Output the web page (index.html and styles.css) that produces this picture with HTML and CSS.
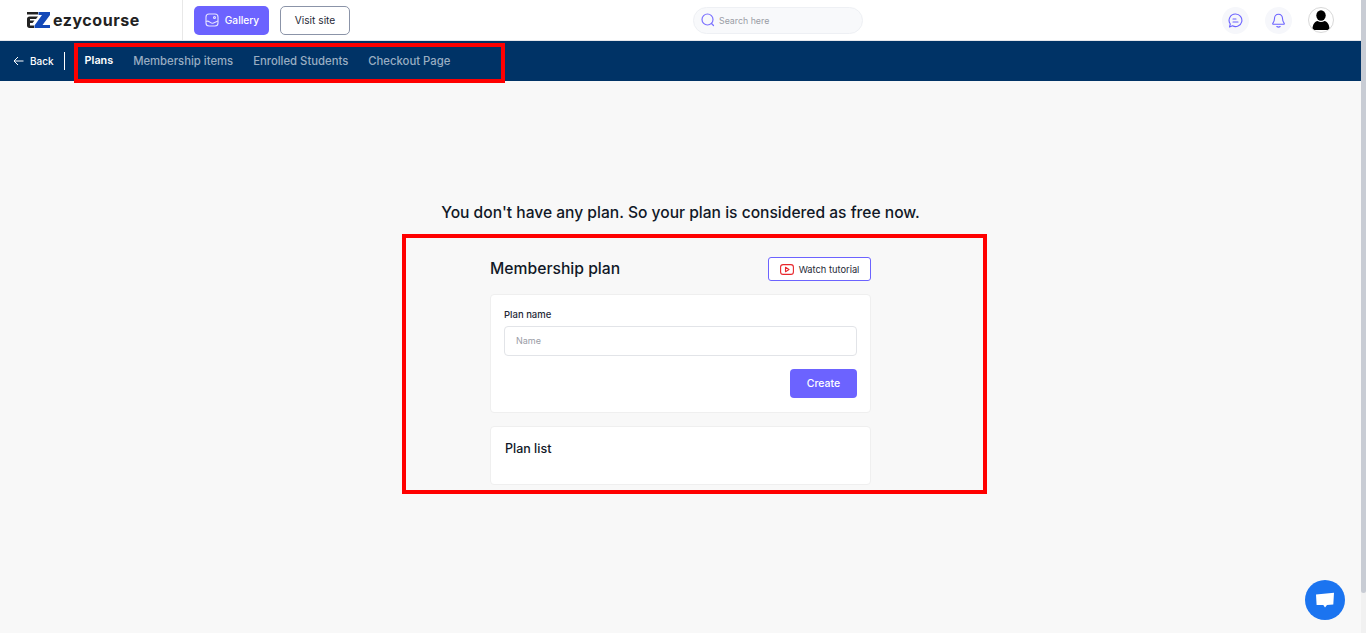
FILE: index.html
```html
<!DOCTYPE html>
<html lang="en">
<head>
<meta charset="utf-8">
<title>Membership plan</title>
<link rel="stylesheet" href="styles.css">
</head>
<body>
<div class="page">
  <header class="topbar">
    <div class="brand">
      <svg class="logo" width="23" height="16" viewBox="0 0 23 16">
        <path fill="#222" d="M0 0h11v2.500H0z"/>
        <path fill="#222" d="M2.500 4.500H11L9 7H3v1.500h4.500L5.500 11H3v2.500h4V16H2.500C1 16 0 15 0 13.500V7C0 5.600 1 4.500 2.500 4.500z"/>
        <path fill="#1449b8" d="M11.500 0H23v3L15.500 13H23v3H7.500v-2.500L15 3h-3.500z"/>
      </svg>
      <span class="brand-name">ezycourse</span>
    </div>
    <div class="top-actions">
      <button class="btn-gallery">
        <svg width="14" height="14" viewBox="0 0 14 14" fill="none" stroke="#e6e4ff" stroke-width="1.100"><rect x="1" y="1" width="12" height="12" rx="3"/><path d="M1 8.500c3-2 4.500 3 7.500 1.500l4.500-2"/><circle cx="9.500" cy="4.500" r="1"/></svg>
        Gallery
      </button>
      <button class="btn-visit">Visit site</button>
    </div>
    <div class="search-wrap">
      <div class="search">
        <svg width="14" height="14" viewBox="0 0 14 14" fill="none" stroke="#7c72ff" stroke-width="1.200"><circle cx="6.500" cy="6.500" r="5.500"/><path d="M10.500 10.500l2 2" stroke-linecap="round"/></svg>
        <span>Search here</span>
      </div>
    </div>
    <div class="top-icons">
      <span class="round">
        <svg width="15" height="15" viewBox="0 0 15 15" fill="none" stroke="#6c63ff" stroke-width="1.100"><path d="M7.500 1a6.300 6.300 0 1 1-3 11.800L1.500 14l.8-3A6.300 6.300 0 0 1 7.500 1z" stroke-linejoin="round"/><path d="M5 6h3M5 9h5" stroke-linecap="round"/></svg>
      </span>
      <span class="round">
        <svg width="15" height="15" viewBox="0 0 15 15" fill="none" stroke="#6c63ff" stroke-width="1.100"><path d="M7.500 1.200c-2.600 0-4 2-4 4.300 0 2.500-.6 3.400-1.700 4.800-.3.400 0 .9.500.9h10.400c.5 0 .8-.5.500-.9-1.100-1.400-1.700-2.300-1.700-4.800 0-2.300-1.400-4.300-4-4.300z" stroke-linejoin="round"/><path d="M5.800 13.500c1 .7 2.400.7 3.400 0" stroke-linecap="round"/></svg>
      </span>
      <span class="avatar">
        <svg width="18" height="20" viewBox="0 0 18 20" fill="#000"><ellipse cx="9" cy="5.500" rx="4.700" ry="5.200"/><path d="M0.500 19c0-4.500 2.500-7.500 5-8 2 1.200 5 1.200 7 0 2.500.5 5 3.500 5 8 0 .7-.5 1-1 1H1.500c-.5 0-1-.3-1-1z"/></svg>
      </span>
    </div>
  </header>

  <nav class="subnav">
    <a class="back">
      <svg width="11" height="10" viewBox="0 0 11 10" fill="none" stroke="#fff" stroke-width="1"><path d="M10.500 5H1M5 1L1 5l4 4"/></svg>
      Back
    </a>
    <span class="divider"></span>
    <ul class="tabs">
      <li class="tab active">Plans</li>
      <li class="tab">Membership items</li>
      <li class="tab">Enrolled Students</li>
      <li class="tab">Checkout Page</li>
    </ul>
  </nav>

  <main class="content">
    <h2 class="notice">You don't have any plan. So your plan is considered as free now.</h2>
    <section class="highlight">
      <div class="column">
        <div class="col-head">
          <h1 class="title">Membership plan</h1>
          <button class="btn-watch">
            <svg width="14" height="11" viewBox="0 0 14 11" fill="none" stroke="#e8262b" stroke-width="1.100"><rect x=".6" y=".6" width="12.800" height="9.800" rx="2.500"/><path d="M5.500 3.300v4.400L9 5.500z" stroke-linejoin="round"/></svg>
            Watch tutorial
          </button>
        </div>
        <div class="card form-card">
          <label class="label">Plan name</label>
          <div class="input">Name</div>
          <div class="form-foot"><button class="btn-create">Create</button></div>
        </div>
        <div class="card list-card">
          <h3 class="list-title">Plan list</h3>
        </div>
      </div>
    </section>
  </main>

  <div class="nav-mark"></div>
  <div class="scrollbar"><div class="thumb"></div></div>
  <button class="chat">
    <svg width="20" height="17" viewBox="0 0 20 17" fill="#fff"><path d="M1 2.500L19 .8l-.7 11.700-6.300.4L10 15.500 8.300 13 1.600 13z"/></svg>
  </button>
</div>
</body>
</html>
```

FILE: styles.css
```css
* { box-sizing: border-box; }
html, body { margin: 0; padding: 0; height: 100%; overflow: hidden; }
body { font-family: Inter, "Noto Sans", "Liberation Sans", sans-serif; color: #111827; background: #f8f8f8; }
button { font-family: inherit; cursor: pointer; }
ul { list-style: none; margin: 0; padding: 0; }
h1, h2, h3 { margin: 0; font-weight: 500; }

.page { position: relative; height: 633px; display: flex; flex-direction: column; }

.topbar { height: 41px; flex: none; background: #fff; border-bottom: 1px solid #e5e7eb; display: flex; align-items: center; padding-right: 32px; }
.brand { width: 183px; height: 40px; flex: none; border-right: 1px solid #e8e8e8; display: flex; align-items: center; gap: 3px; padding-left: 27px; }
.logo { flex: none; }
.brand-name { font-size: 16px; font-weight: 700; letter-spacing: .55px; color: #222; }
.top-actions { display: flex; align-items: center; gap: 11px; margin-left: 11px; }
.btn-gallery { width: 75px; height: 29px; border: 0; border-radius: 5px; background: #6c63ff; color: #fff; font-size: 10.200px; font-weight: 500; display: flex; align-items: center; justify-content: center; gap: 6px; padding: 0 0 0 1px; }
.btn-visit { width: 70px; height: 29px; border: 1px solid #8b94a8; border-radius: 5px; background: #fff; color: #1f2937; font-size: 10.200px; padding: 0; }
.search-wrap { flex: 1; display: flex; padding-left: 343px; }
.search { width: 170px; height: 27px; border: 1px solid #eef0f4; border-radius: 14px; background: #f8f9fb; display: flex; align-items: center; gap: 4px; padding-left: 7px; font-size: 8.800px; color: #9a9da6; }
.top-icons { display: flex; align-items: center; gap: 16px; }
.round { width: 27px; height: 27px; border-radius: 50%; background: #f6f7fb; display: flex; align-items: center; justify-content: center; }
.avatar { width: 26px; height: 26px; border-radius: 50%; background: #fff; border: 1px solid #d9d9d9; display: flex; align-items: flex-end; justify-content: center; overflow: hidden; padding-bottom: 2px; }

.subnav { height: 40px; flex: none; background: #003366; display: flex; align-items: center; padding-left: 13px; }
.back { display: flex; align-items: center; gap: 6px; color: #fff; font-size: 10px; font-weight: 500; }
.divider { width: 1px; height: 18px; background: #fff; margin-left: 10px; }
.tabs { display: flex; gap: 20px; margin-left: 20px; }
.tab { font-size: 11.300px; font-weight: 500; color: #99adc2; }
.tab.active { color: #fff; font-size: 10.800px; font-weight: 600; }

.content { flex: 1; display: flex; flex-direction: column; align-items: center; padding: 122px 5px 0 0; }
.notice { font-size: 15.600px; line-height: 20px; color: #111827; }
.highlight { width: 585px; height: 260px; margin: 11px 0 0 28px; border: 4px solid #f00; display: flex; justify-content: center; }
.column { width: 381px; margin-right: 28px; padding-top: 19px; flex: none; }
.col-head { display: flex; align-items: center; justify-content: space-between; height: 24px; }
.title { font-size: 15.700px; line-height: 26px; color: #111827; }
.btn-watch { width: 103px; height: 24px; border: 1px solid #6c63ff; border-radius: 3px; background: #fff; color: #1f2937; font-size: 9.300px; display: flex; align-items: center; justify-content: center; gap: 5px; padding: 0; }
.card { background: #fff; border: 1px solid #efefef; border-radius: 4px; }
.form-card { height: 119px; margin-top: 13px; padding: 14px 13px 0; display: flex; flex-direction: column; }
.label { font-size: 9.500px; line-height: 12px; font-weight: 500; color: #1f2937; }
.input { height: 30px; margin-top: 5px; border: 1px solid #e2e4e8; border-radius: 4px; background: #fff; font-size: 9px; line-height: 28px; padding-left: 11px; color: #9a9da6; }
.form-foot { display: flex; justify-content: flex-end; margin-top: 13px; }
.btn-create { width: 67px; height: 29px; border: 0; border-radius: 4px; background: #6c63ff; color: #fff; font-size: 10.500px; font-weight: 500; padding: 0; }
.list-card { height: 59px; margin-top: 13px; padding: 14px; }
.list-title { font-size: 12.500px; line-height: 15px; font-weight: 500; color: #111827; }

.nav-mark { position: absolute; left: 74px; top: 43px; width: 431px; height: 40px; border: 4px solid #f00; }
.scrollbar { position: absolute; right: 0; top: 0; width: 5px; height: 633px; background: #f1f1f1; }
.thumb { width: 5px; height: 593px; background: #c8ccd4; border-radius: 0 0 3px 3px; }
.chat { position: absolute; left: 1305px; top: 580px; width: 40px; height: 40px; border: 0; border-radius: 50%; background: #1b74f0; display: flex; align-items: center; justify-content: center; padding: 0; }
```
